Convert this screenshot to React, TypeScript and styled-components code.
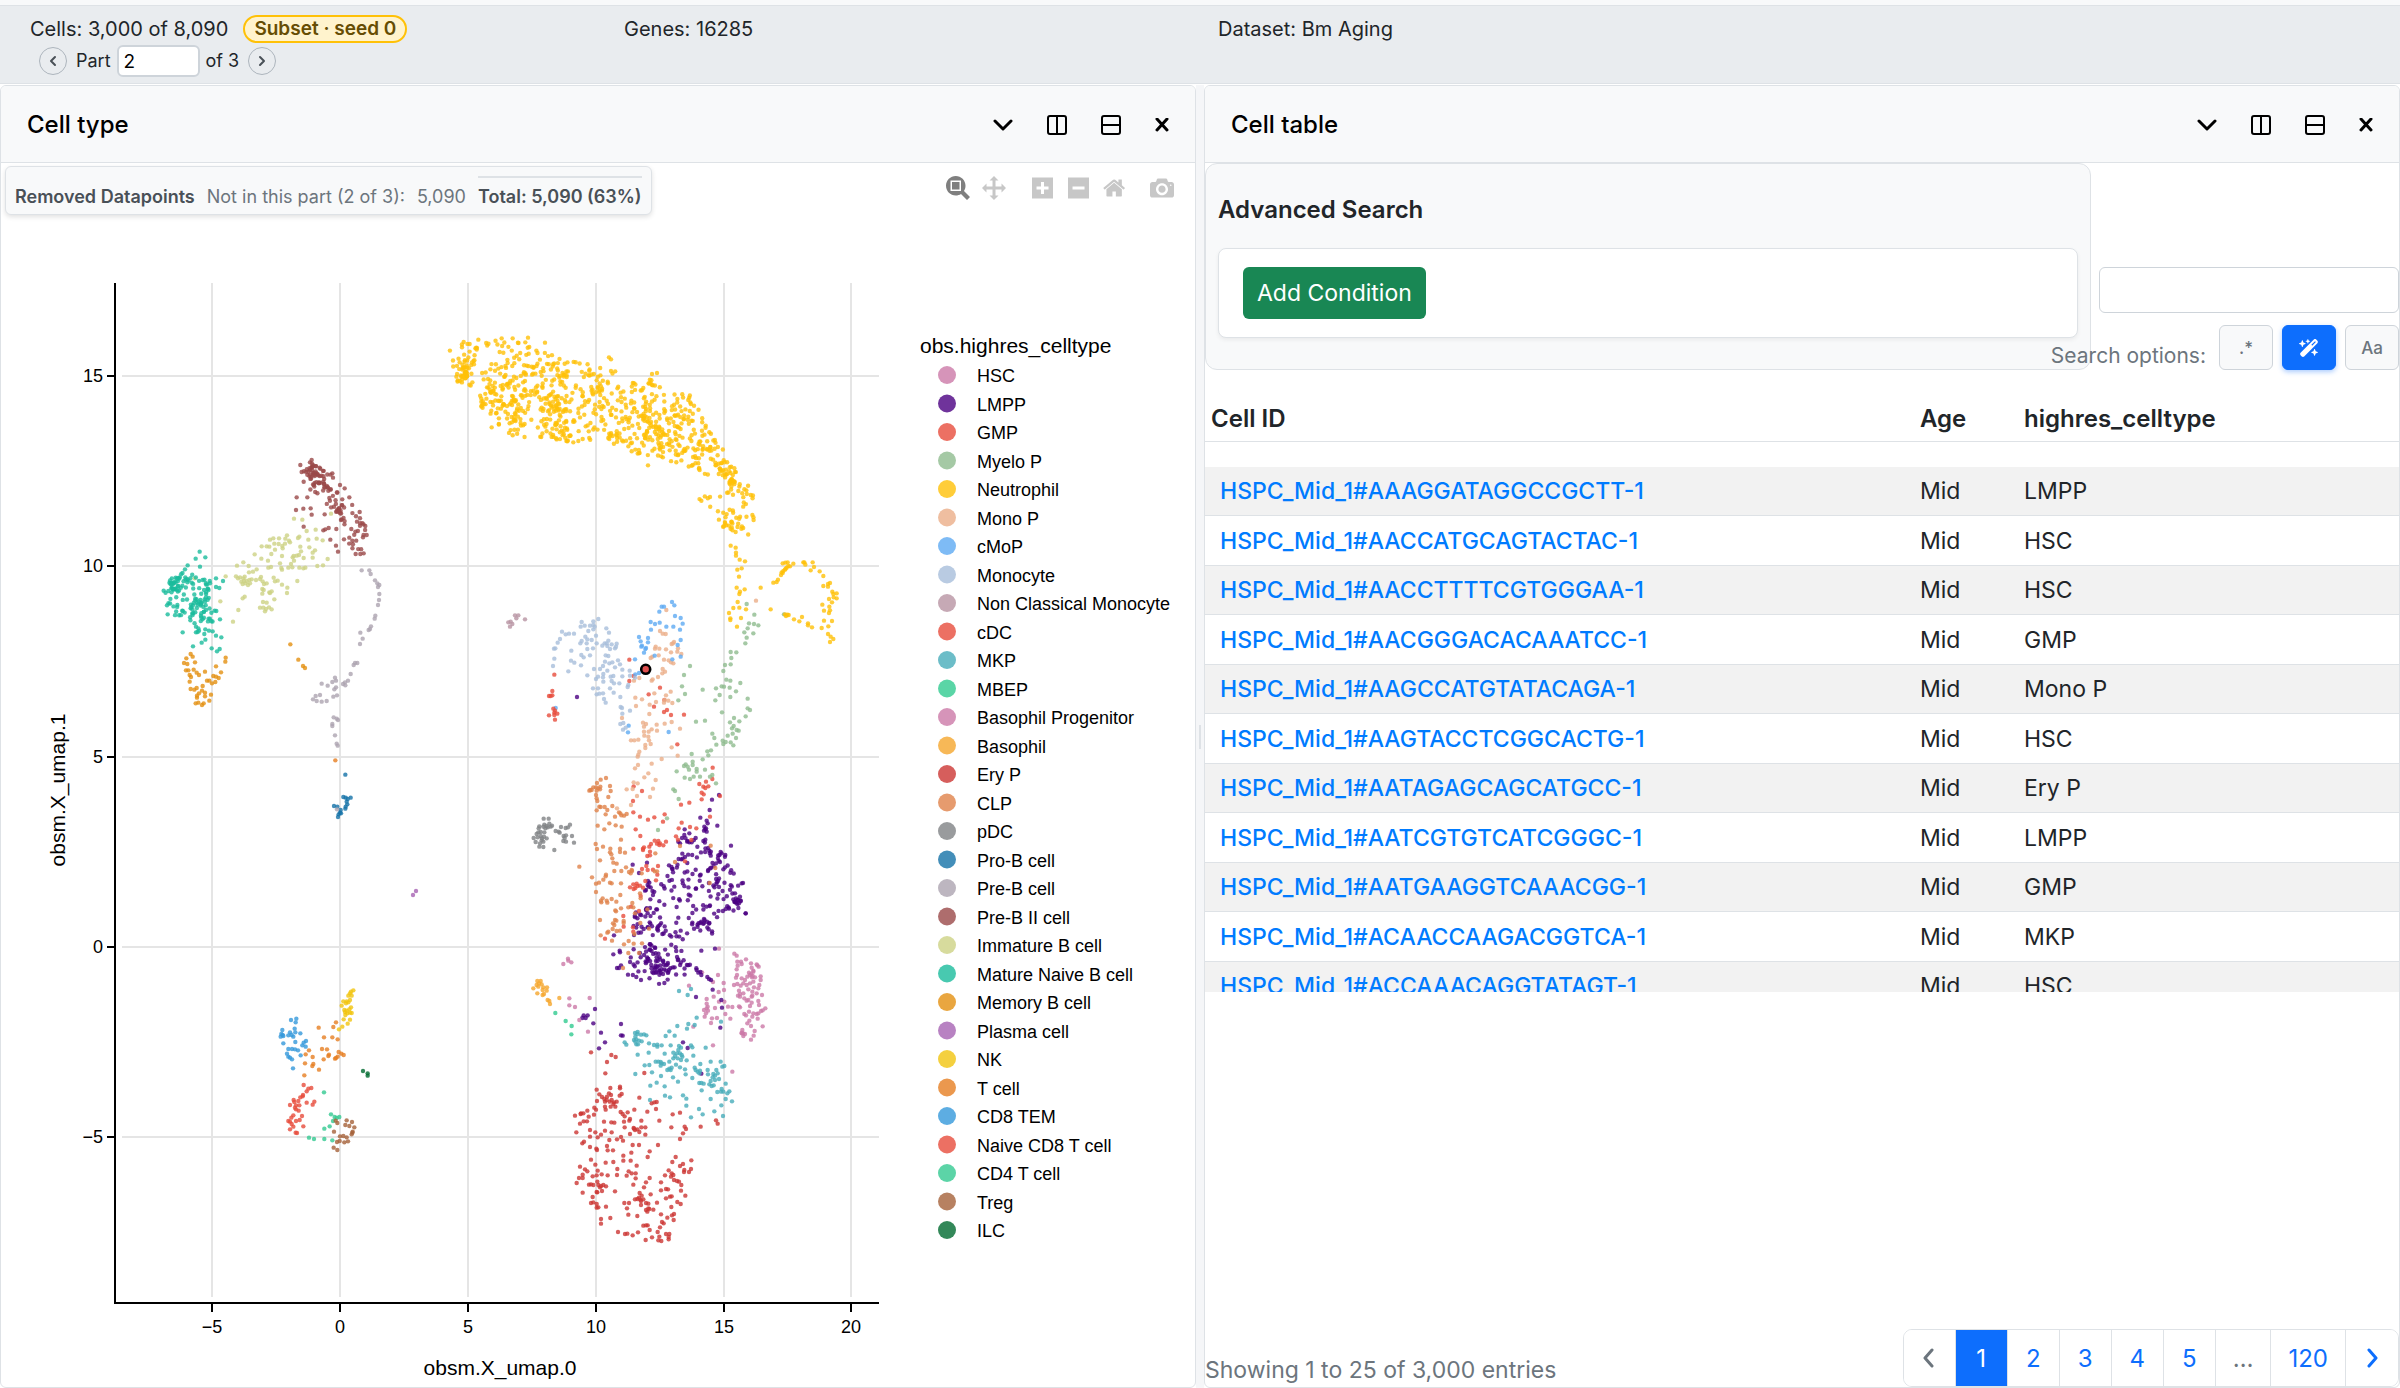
import React from 'react';
import styled, { createGlobalStyle } from 'styled-components';
import { FaWandMagicSparkles } from 'react-icons/fa6';

/* ---------- tokens ---------- */

const line = '#dee2e6';
const surface = '#f8f9fa';
const muted = '#6c757d';
const blue = '#0d6efd';
const sans = "Inter, 'Liberation Sans', sans-serif";
const chartFont = "'Liberation Sans', Arial, sans-serif";

const GlobalStyle = createGlobalStyle`
  *, *::before, *::after { box-sizing: border-box; }
  body { margin: 0; background: #fff; color: #212529; font-family: ${sans}; font-size: 24px; }
  button, input { font-family: inherit; margin: 0; }
`;

/* ---------- page frame ---------- */

const Page = styled.div`
  display: flex;
  flex-direction: column;
  min-height: 100vh;
`;

const StatusBar = styled.header`
  display: grid;
  grid-template-columns: repeat(4, 1fr);
  margin-bottom: 1px;
  padding: 9px 12px 6px;
  background: #e9ecef;
  border-top: 1px solid ${line};
  border-bottom: 1px solid ${line};
  font-size: 20px;
  line-height: 28px;
`;

const TopStrip = styled.div`
  height: 5px;
  background: ${surface};
`;

const StatusCell = styled.div`
  padding: 0 18px;
`;

const CountRow = styled.div`
  display: flex;
  align-items: center;
  gap: 15px;
`;

const SubsetBadge = styled.span`
  display: inline-flex;
  align-items: center;
  height: 28px;
  padding: 0 9px;
  border: 2px solid #ffc107;
  border-radius: 14px;
  background: #fff3cd;
  color: #664d03;
  font-size: 19px;
  font-weight: 600;
`;

const PartRow = styled.div`
  display: flex;
  align-items: center;
  gap: 6px;
  height: 32px;
  margin-top: 2px;
  padding-left: 6px;
  font-size: 18px;
`;

const RoundButton = styled.button`
  display: grid;
  place-items: center;
  width: 28px;
  height: 28px;
  margin: 0 3px;
  padding: 0;
  border: 1px solid #adb5bd;
  border-radius: 50%;
  background: transparent;
  color: #495057;
`;

const PartInput = styled.input`
  width: 83px;
  height: 32px;
  padding: 0 5px;
  border: 2px solid #ced4da;
  border-radius: 6px;
  background: #fff;
  color: #000;
  font-size: 19px;
`;

const Workspace = styled.main`
  flex: 1;
  display: grid;
  grid-template-columns: minmax(0, 1fr) 8px minmax(0, 1fr);
`;

const Gutter = styled.div`
  display: grid;
  place-items: center;
  background: #f5f6f8;
  &::after {
    content: '';
    width: 2px;
    height: 24px;
    background: ${line};
  }
`;

const Panel = styled.section`
  display: flex;
  flex-direction: column;
  min-width: 0;
  border: 1px solid ${line};
  border-radius: 6px;
  background: #fff;
  overflow: hidden;
`;

const PanelHeader = styled.div`
  display: flex;
  align-items: center;
  justify-content: space-between;
  height: 77px;
  padding: 2px 23px 0 26px;
  border-bottom: 1px solid ${line};
  background: ${surface};
`;

const PanelTitle = styled.h2`
  margin: 0;
  color: #000;
  font-size: 24px;
  font-weight: 500;
  line-height: 32px;
`;

const PanelActions = styled.div`
  display: flex;
  gap: 26px;
`;

const IconButton = styled.button`
  display: grid;
  place-items: center;
  width: 28px;
  height: 28px;
  padding: 0;
  border: 0;
  background: transparent;
  color: #000;
  &:last-child { width: 21px; }
`;

/* ---------- scatter plot ---------- */

const PlotBody = styled.div`
  position: relative;
  flex: 1;
`;

const PlotSvg = styled.svg`
  display: block;
  width: 100%;
  height: auto;
  text { font-family: ${chartFont}; fill: #000; }
`;

const RemovedNote = styled.div`
  position: absolute;
  top: 3px;
  left: 4px;
  display: flex;
  align-items: flex-end;
  gap: 12px;
  height: 49px;
  padding: 0 9px 5px 9px;
  border: 1px solid ${line};
  border-radius: 6px;
  background: ${surface};
  box-shadow: 0 2px 5px rgba(0, 0, 0, 0.12);
  color: ${muted};
  font-size: 18px;
  line-height: 24px;
  white-space: nowrap;
  strong { color: #495057; font-weight: 600; }
`;

const RemovedTotal = styled.strong`
  padding-top: 7px;
  border-top: 2px solid ${line};
`;

const ModeBar = styled.div`
  position: absolute;
  top: 13px;
  right: 15px;
  display: flex;
  align-items: center;
`;

const ModeButton = styled.button<{ $active?: boolean; $gap?: boolean }>`
  display: grid;
  place-items: center;
  width: 36px;
  height: 24px;
  margin-left: ${(p) => (p.$gap ? '12px' : '0')};
  padding: 0;
  border: 0;
  background: transparent;
  svg { fill: ${(p) => (p.$active ? '#7f7f7f' : '#c7c7c7')}; }
`;

/* ---------- table panel ---------- */

const SearchArea = styled.div`
  display: flex;
  gap: 8px;
`;

const AdvancedSearch = styled.div`
  flex: 1;
  padding: 30px 12px 31px;
  border: 1px solid ${line};
  border-radius: 12px;
  background: ${surface};
`;

const AdvancedTitle = styled.h3`
  margin: 0 0 22px;
  font-size: 24px;
  font-weight: 600;
  line-height: 32px;
`;

const ConditionBox = styled.div`
  padding: 18px 24px;
  border: 1px solid ${line};
  border-radius: 8px;
  background: #fff;
  box-shadow: 0 2px 4px rgba(0, 0, 0, 0.06);
`;

const AddButton = styled.button`
  display: block;
  height: 52px;
  padding: 0 14px;
  border: 0;
  border-radius: 6px;
  background: #198754;
  color: #fff;
  font-size: 23px;
`;

const SearchSide = styled.div`
  display: flex;
  flex-direction: column;
  justify-content: flex-end;
  gap: 12px;
  width: 300px;
`;

const SearchInput = styled.input`
  width: 100%;
  height: 46px;
  padding: 0 12px;
  border: 1px solid #ced4da;
  border-radius: 6px;
  background: #fff;
  font-size: 21px;
`;

const OptionRow = styled.div`
  display: flex;
  align-items: center;
  justify-content: flex-end;
  gap: 9px;
  white-space: nowrap;
`;

const OptionLabel = styled.span`
  padding: 16px 4px 0 0;
  color: ${muted};
  font-size: 21px;
  line-height: 28px;
`;

const OptionButton = styled.button<{ $active?: boolean }>`
  display: grid;
  place-items: center;
  flex: none;
  width: 54px;
  height: 45px;
  padding: 0;
  border: 1px solid ${(p) => (p.$active ? blue : '#ced4da')};
  border-radius: 6px;
  background: ${(p) => (p.$active ? blue : surface)};
  box-shadow: ${(p) => (p.$active ? '0 2px 5px rgba(13, 110, 253, 0.35)' : 'none')};
  color: ${(p) => (p.$active ? '#fff' : muted)};
  font-size: 17px;
  font-weight: 500;
`;

const TableWindow = styled.div`
  height: 622px;
  overflow: hidden;
`;

const DataTable = styled.table`
  width: 100%;
  table-layout: fixed;
  border-collapse: separate;
  border-spacing: 0;
  line-height: 32px;
  th, td { padding: 0 6px; text-align: left; white-space: nowrap; }
  th { height: 72px; padding-top: 26px; border-bottom: 1px solid ${line}; font-weight: 600; }
  td { height: 49px; border-bottom: 1px solid ${line}; font-size: 23px; }
  tbody::before { content: ''; display: block; height: 25px; }
  tbody tr:nth-child(odd) td { background: #f2f2f2; }
  tbody tr:nth-child(even) td { height: 50px; }
`;

const AgeCol = styled.col`
  width: 104px;
`;

const TypeCol = styled.col`
  width: 381px;
`;

const CellLink = styled.a`
  padding-left: 9px;
  color: #007bff;
  font-weight: 500;
  text-decoration: none;
`;

const TableFooter = styled.div`
  display: flex;
  justify-content: space-between;
  align-items: flex-end;
  margin-top: auto;
`;

const EntryCount = styled.p`
  margin: 0;
  color: ${muted};
  font-size: 23px;
  line-height: 34px;
`;

const Pager = styled.nav`
  display: flex;
  border: 1px solid ${line};
  border-radius: 9px;
  overflow: hidden;
`;

const PageButton = styled.button<{ $active?: boolean; $quiet?: boolean }>`
  display: grid;
  place-items: center;
  min-width: 52px;
  height: 56px;
  padding: 0 17px;
  border: 0;
  border-right: 1px solid ${line};
  background: ${(p) => (p.$active ? blue : '#fff')};
  color: ${(p) => (p.$active ? '#fff' : p.$quiet ? muted : blue)};
  font-size: 24px;
  &:last-child { border-right: 0; }
`;

/* ---------- data ---------- */

type Cluster = {
  name: string;
  color: string;
  /* [origin x, origin y, "x,y x,y ..."] with offsets in thirds of a unit */
  points?: [number, number, string][];
  /* [origin x, origin y, count, outline] filled with seeded samples */
  areas?: [number, number, number, string][];
};

const clusters: Cluster[] = [
  {
    name: 'HSC', color: '#cc79a7',
    points: [[540, 900, '583,161 590,167 618,178 603,185 592,185 605,192 593,197 590,208 633,190 650,193 656,200 635,203 640,212 627,218 630,225 636,232 622,230 645,232 662,229 662,240 591,225 588,233 605,235 615,240 610,250 582,255 592,252 602,257 620,255 630,250 640,245 642,262 655,265 658,255 625,268 637,275 650,280 666,285 597,272 600,282 594,287 600,290 613,295 620,302 625,300 635,290 637,287 597,319 600,322 630,318 635,308 655,303 657,315 676,325 663,333 668,331 627,335 640,340 650,342 655,340 613,342 618,346 637,350 628,362 653,356 622,370 633,378 668,379 607,390 609,400 610,408 615,402 605,398 644,393 641,407 633,419 534,225 537,146 486,217 519,246 551,249 552,270 536,276 521,290 537,305 553,305 500,297 500,311 503,320 500,325 492,330 504,332 525,324 498,340 494,350 516,355 531,354 564,320 577,321 556,342 571,356 513,369 460,380 447,257 519,436 577,515 640,215 634,222 638,228 610,280 605,400 652,196']],
  },
  {
    name: 'LMPP', color: '#4b0082',
    points: [
      [520, 580, '171,351 338,854 357,879 381,848 597,645 576,659 569,690 541,713 560,722 563,730 553,740 558,745 552,752 560,755 556,748 556,779 592,737 633,797 494,748 493,765 486,774 475,785 480,790 508,760 527,774 515,787 508,787 282,1066 484,838 488,836 487,821 447,856 457,867 384,903 388,908 383,915 392,922 378,930 375,932 386,920 399,945 391,958 669,909 665,910 677,1000 660,950 655,960 648,955 643,965 640,958 652,972 645,940 662,962 610,868 615,862 596,842 600,846 588,850 602,816 605,820'],
      [540, 900, '165,327 143,346 131,346 137,354 127,354 160,370 183,398 243,372 243,406 248,407 195,427 177,445 429,427 443,444 484,521 541,383 544,300 546,323 518,269 468,291 525,146 484,152 513,240 507,237 502,231 484,225 470,210 475,218 617,40 585,5 592,0 597,10 602,3 588,8 220,163 239,152 240,157 231,204 237,204 243,196 264,224 303,240 289,231'],
    ],
    areas: [
      [0, 0, 140, '683,833 702,838 723,850 733,863 738,880 742,900 741,908 730,918 724,930 712,934 690,930 672,925 660,905 650,890 668,865 680,855'],
      [0, 0, 105, '632,910 650,895 665,925 690,933 684,950 690,960 706,972 700,976 690,968 683,978 673,988 660,989 645,978 627,974 632,950'],
      [0, 0, 38, '640,944 655,944 668,965 675,968 660,980 645,965'],
    ],
  },
  {
    name: 'GMP', color: '#e74c3c',
    points: [[520, 580, '328,239 328,303 341,288 420,323 386,343 402,380 432,396 441,390 433,360 453,405 492,404 472,493 578,563 577,597 558,605 538,612 550,620 565,619 556,624 545,638 551,643 545,658 600,648 508,668 483,674 570,710 341,619 366,633 339,663 340,697 360,710 384,719 403,712 434,703 429,725 485,728 476,745 510,741 529,745 347,748 361,768 468,769 474,779 340,806 369,806 372,802 388,800 393,792 390,815 411,791 415,783 420,790 430,796 438,785 418,795 404,782 369,810 382,828 390,826 495,844 414,858 379,858 366,867 383,870 399,869 412,884 408,901 376,903 330,922 340,913 350,911 360,917 346,924 352,918 341,927 369,923 362,948 333,980 357,993 310,1008 311,1040 339,1042 340,1055 255,1076 514,780']],
  },
  {
    name: 'Myelo P', color: '#8fbc8f',
    points: [[520, 580, '680,72 703,104 687,130 702,132 715,136 683,145 673,157 700,160 680,173 676,190 632,216 649,217 634,234 615,255 632,253 610,273 510,258 492,285 486,319 548,329 619,299 631,302 661,309 605,319 588,325 612,320 629,323 599,345 631,351 648,334 586,361 495,342 475,361 683,356 683,385 690,390 677,409 606,397 642,414 658,424 630,427 528,425 555,422 641,438 636,445 650,450 656,452 623,467 638,461 648,474 577,461 583,474 589,494 608,482 617,486 610,492 632,487 640,496 573,511 562,514 565,526 515,522 548,538 518,545 518,555 497,553 503,560 492,558 507,569 530,567 530,575 555,569 470,574 521,590 494,593 510,597 540,590 577,585 570,590 588,610 460,628 465,633 476,657 441,715 414,750 792,103']],
  },
  {
    name: 'Neutrophil', color: '#ffc107',
    points: [
      [420, 310, '932,707 947,713 948,728 948,737 959,749 975,754 952,779 965,775 957,800 950,833 974,838 958,852 960,845 953,876 940,894 958,893 978,898 927,909 931,925 931,930 963,924 951,950 1022,833 1052,898 1060,818 1070,816 1074,809 1083,795 1085,787 1088,789 1090,783 1095,779 1100,773 1105,768 1097,776 1110,769 1120,761 1103,757 1096,758 1088,760 1150,757 1153,757 1156,764 1178,757 1182,771 1172,781 1199,784 1210,798 1230,819 1224,822 1224,830 1210,828 1237,845 1240,852 1250,850 1241,862 1250,865 1227,867 1236,877 1207,884 1228,890 1212,902 1227,909 1230,901 1212,932 1236,933 1225,949 1205,954 1176,952 1164,940 1164,946 1146,921 1138,934 1122,928 1106,915 1098,918 1095,913 1102,914 1224,972 1232,980 1240,987 1230,996 375,98 324,83 245,85 278,85 175,89 131,96 711,189 696,192 567,142 573,148 684,466 215,352'],
    ],
    areas: [
      [420, 310, 640, '88,120 115,98 175,95 245,90 320,95 390,130 440,150 520,160 585,178 625,200 665,235 700,190 735,228 800,240 830,270 845,320 875,370 912,415 945,470 955,515 925,520 850,490 800,478 740,450 685,438 640,430 550,395 485,400 370,388 280,382 205,325 170,300 165,240 115,215 98,170'],
      [420, 310, 32, '100,150 155,150 160,190 135,220 112,215 98,170'],
      [420, 310, 45, '170,290 200,230 290,215 320,240 290,335 215,310'],
      [420, 310, 35, '370,230 440,260 440,350 400,350 360,310'],
      [420, 310, 40, '650,300 720,340 810,390 810,445 760,435 680,410'],
      [420, 310, 32, '850,400 910,420 965,510 920,530 880,460'],
      [420, 310, 28, '935,500 990,530 1005,575 1010,625 985,640 950,560 900,560'],
      [420, 310, 30, '880,590 940,600 985,640 985,675 960,682 920,665 900,640'],
      [420, 310, 7, '815,572 845,545 890,535 930,590 870,595'],
    ],
  },
  {
    name: 'Mono P', color: '#ebae88',
    points: [[520, 580, '439,90 420,153 437,162 428,161 455,192 462,186 459,190 407,200 418,206 405,206 438,208 453,217 474,205 472,215 484,222 416,226 432,239 392,234 397,230 446,241 453,247 460,250 428,267 435,275 427,280 414,291 395,302 398,298 358,294 342,302 403,340 452,335 438,346 434,360 445,362 457,369 432,368 346,353 366,358 389,374 348,378 408,366 306,414 388,402 369,428 378,432 410,434 455,426 434,431 372,440 386,455 395,448 411,452 372,455 373,467 333,481 343,481 355,479 376,495 387,481 392,492 376,504 455,502 480,446 473,527 358,515 355,524 353,530 425,537 395,551 354,555 345,565 385,580 373,592 407,600 341,607 353,610 320,628 338,627 399,626 351,648 390,651 333,675 291,685 385,470 708,62']],
  },
  {
    name: 'cMoP', color: '#5eaaf2',
    points: [[520, 580, '456,66 463,76 425,80 432,80 418,95 465,108 482,114 488,131 480,149 460,140 439,140 419,128 405,132 392,126 393,149 357,171 384,174 362,184 384,187 366,197 376,207 372,218 345,238 404,227 473,195 482,180 482,230 457,238 357,279 346,283 107,384 326,437 324,457 446,456 364,200 378,204']],
  },
  {
    name: 'Monocyte', color: '#a8bedb',
    points: [[520, 580, '185,126 182,140 194,137 220,124 235,117 220,135 220,148 210,137 126,155 137,163 147,161 162,161 120,177 113,188 102,206 106,205 154,212 103,236 99,258 145,274 153,242 163,248 183,256 181,190 185,183 200,190 196,170 205,153 215,180 230,190 228,167 219,205 210,226 191,232 184,225 202,207 259,145 267,158 265,182 254,190 247,197 262,198 275,193 285,205 270,207 290,191 257,226 255,245 249,258 268,250 277,247 285,262 294,241 300,253 202,286 222,267 228,297 234,290 240,267 250,282 262,272 272,290 280,288 250,305 249,292 275,303 282,310 307,289 307,269 298,310 329,272 330,287 219,325 234,325 230,343 238,341 249,340 270,325 281,338 301,351 252,357 257,368 302,381 306,384 330,392 307,401 301,432 310,429 309,449 323,321 345,293 317,443 325,315 224,140 288,200 260,190 265,228 202,178']],
  },
  { name: 'Non Classical Monocyte', color: '#b893a2', points: [[420, 310, '272,935 265,937 277,942 270,950 289,925 285,916 295,916 315,928']] },
  { name: 'cDC', color: '#e74c3c', points: [[520, 580, '103,284 97,333 87,348 97,346 100,386 105,392 103,398 112,401 103,405 87,406 105,419 92,348']] },
  {
    name: 'MKP', color: '#47acba',
    points: [[540, 900, '417,273 453,267 443,285 470,353 412,378 445,372 464,375 441,386 388,394 377,408 404,407 543,365 285,399 293,396 292,402 303,404 312,403 319,406 286,410 282,420 289,418 286,425 297,422 305,424 294,433 289,433 254,427 259,434 327,430 342,435 352,434 365,436 352,440 392,436 326,458 293,464 374,461 417,438 423,443 415,450 400,458 411,460 420,460 425,465 405,468 413,475 427,470 400,475 423,480 440,481 453,436 457,442 460,467 497,443 347,485 355,485 362,486 372,492 365,490 388,485 314,496 328,495 362,497 408,494 395,503 388,506 382,510 392,510 420,502 435,508 437,523 464,503 467,510 481,492 512,485 542,485 553,498 547,500 336,517 286,522 457,534 399,532 414,545 363,528 350,548 331,557 374,559 478,520 473,515 480,512 503,510 504,523 520,522 525,527 533,520 529,510 518,532 525,540 512,543 537,537 478,549 484,549 491,551 508,553 515,558 521,556 557,551 485,571 545,567 543,575 532,576 550,575 568,574 562,580 557,597 512,597 576,604 544,616 375,587 390,592 429,586 439,596 439,617 330,600 477,627 488,643 523,634 549,648 453,652']],
  },
  { name: 'MBEP', color: '#31ca90', points: [[540, 900, '46,339 77,363 95,378 94,403']] },
  { name: 'Basophil Progenitor', color: '#cc79a7', points: [[540, 900, '84,176 85,182 94,187 70,192 88,295 88,316 105,321 149,294 118,360 144,395']] },
  { name: 'Basophil', color: '#f5a62d', points: [[540, 900, '2,243 5,253 10,262 21,262 8,270 20,272 12,282 8,285 23,300 28,303 30,312 58,294 -8,243 -3,250 -10,255 -20,265 -8,280 -5,260']] },
  {
    name: 'Ery P', color: '#cc3633',
    points: [[540, 900, '153,457 214,465 227,471 201,486 196,520 313,519 240,560 240,565 211,564 170,569 178,583 186,591 193,597 201,590 207,580 213,585 245,582 239,587 171,603 195,605 200,600 209,605 215,600 222,607 220,612 230,605 212,620 226,620 195,620 197,629 168,629 163,623 298,593 335,610 343,607 350,606 348,627 322,635 283,629 263,637 242,636 248,642 254,649 142,632 130,640 122,642 123,640 105,647 146,650 162,644 120,671 131,664 141,664 192,665 214,667 223,668 270,657 268,662 252,665 304,662 358,662 398,643 420,638 528,661 533,671 482,680 254,682 281,684 292,688 304,682 316,682 285,690 298,696 270,702 316,704 282,686 394,682 434,680 438,687 429,700 420,717 150,690 150,710 109,697 166,697 195,692 215,697 183,704 173,712 208,720 231,718 243,711 249,722 132,725 127,730 150,741 169,746 171,750 201,738 203,751 219,751 278,735 297,735 354,735 329,754 323,771 274,758 250,767 250,782 272,782 153,779 166,794 197,788 220,786 290,797 407,771 397,786 454,781 429,792 120,800 135,808 142,814 128,824 173,812 128,834 117,834 158,829 170,826 185,823 203,826 232,807 231,825 266,814 260,827 275,820 287,820 287,835 329,834 386,811 375,826 395,820 400,825 393,830 420,798 433,810 432,816 447,816 453,807 402,840 411,843 417,845 424,855 318,847 312,862 280,854 363,847 110,849 128,878 147,854 153,853 160,855 172,845 175,855 180,862 183,858 190,855 198,859 186,873 170,876 172,877 225,874 158,891 153,909 160,907 170,912 175,922 170,923 198,920 183,957 183,971 211,954 299,879 305,887 297,893 292,897 285,898 301,899 310,898 303,903 303,915 318,909 325,911 332,883 363,871 378,867 384,868 378,895 390,890 395,889 423,872 436,887 412,906 422,912 394,921 351,908 253,909 267,909 261,925 265,944 292,948 318,930 322,935 328,927 340,929 325,925 363,943 382,953 396,946 402,942 401,960 310,977 318,976 323,976 366,966 371,970 360,982 329,990 234,996 255,1002 262,1001 278,1006 294,997 336,1012 317,1020 353,996 358,1010 355,1021 364,1023 378,1002 388,1002 386,1011 386,1018']],
  },
  {
    name: 'CLP', color: '#e0824a',
    points: [[520, 580, '258,594 242,599 231,609 270,618 241,620 235,625 228,622 220,622 211,630 208,632 215,630 240,628 230,632 272,633 228,645 230,655 232,663 265,651 242,681 238,680 254,681 277,678 230,691 257,703 262,690 285,710 297,697 301,700 304,706 320,702 312,707 233,737 268,730 253,748 287,736 305,740 303,779 227,792 231,807 249,800 178,860 271,806 270,817 300,816 300,806 315,818 240,841 277,835 274,823 280,848 290,851 283,873 304,873 318,862 216,892 228,911 258,884 257,889 237,908 250,899 270,908 275,910 228,936 303,910 301,945 248,955 244,967 260,962 262,968 275,957 289,965 243,962 327,876 336,873 332,880 365,880 335,870 406,820 404,874 411,874 465,846 572,797 586,864 569,909 480,798 286,991 303,985 288,994 337,969 325,982 240,1020 285,1020 289,1022 311,1023 311,1029 279,1030 283,1035 278,1047 290,1053 262,1058 265,1055 242,1066 300,1052 276,1082 343,1062 361,1029 387,1046 366,1090 326,1083 341,1091 312,1093 340,982 362,955 360,940 382,988 345,1000 325,1119 357,1119 309,1164']],
  },
  { name: 'pDC', color: '#808284', points: [[520, 580, '71,716 86,716 73,734 88,731 80,738 92,740 96,737 58,739 56,745 76,745 83,742 123,741 137,744 150,734 144,742 55,757 50,762 62,756 73,757 41,774 53,772 62,768 66,775 72,770 80,775 47,786 65,781 70,785 58,800 70,801 103,810 107,753 116,755 119,758 131,768 138,766 134,774 130,783 138,785 156,768 162,788 60,790 70,740']] },
  { name: 'Pro-B cell', color: '#1472a8', points: [[100, 420, '736,1064 730,1131 737,1133 743,1137 752,1133 740,1145 742,1153 737,1160 736,1166 702,1158 712,1160 722,1170 720,1178 716,1183 714,1191 723,1180']] },
  { name: 'Pre-B cell', color: '#aca4b0', points: [[100, 420, '785,451 808,451 812,462 825,481 832,490 838,495 834,501 838,522 837,540 834,555 826,587 824,596 813,619 810,627 806,630 781,638 788,656 780,672 772,729 765,729 761,735 752,762 744,782 735,787 729,792 736,796 705,773 708,782 697,786 708,802 703,808 683,797 665,791 711,826 700,830 660,825 647,828 639,838 650,843 665,845 680,843 701,892 710,896 714,900 697,912 697,918 705,946 710,971 713,977 711,1168']] },
  {
    name: 'Pre-B II cell', color: '#9a4848',
    points: [[100, 420, '590,232 622,232 588,270 610,266 632,265 635,284 611,320 674,283 670,331 676,328 686,324 709,327 691,359 708,377 714,395 601,135 605,156 635,120 630,127 636,131 697,160 699,173 720,195 734,205 748,232 779,276 796,318 800,345 791,400 781,402 767,402 732,358']],
    areas: [
      [100, 420, 82, '605,140 635,120 660,140 700,170 705,210 755,240 760,275 790,300 798,345 788,400 765,400 745,370 735,320 710,280 680,255 655,225 625,210 610,190'],
      [100, 420, 26, '615,150 640,130 665,150 680,195 630,180'],
      [100, 420, 10, '705,262 735,262 730,280 708,285'],
    ],
  },
  {
    name: 'Immature B cell', color: '#cdd285',
    points: [[100, 420, '582,296 607,299 693,281 620,333 647,329 561,346 598,350 594,354 510,359 520,355 537,355 556,356 567,362 570,367 625,359 650,356 668,361 485,379 500,379 508,380 523,371 536,372 547,378 555,371 548,385 525,389 601,380 628,382 645,391 603,394 514,402 464,403 546,408 638,398 484,416 581,408 590,407 597,405 578,412 611,414 638,413 683,417 504,422 582,422 540,430 573,432 430,427 411,437 446,438 505,443 513,441 544,444 565,443 577,442 598,443 610,445 616,443 652,438 669,436 470,448 546,449 377,469 459,455 447,457 408,469 414,475 420,472 430,475 434,470 424,485 432,483 440,483 448,480 428,492 436,490 444,495 450,490 455,478 468,480 483,471 480,477 488,484 492,492 500,490 521,473 525,484 533,482 546,494 562,503 592,483 487,507 491,510 515,514 510,519 487,521 508,517 561,519 434,530 428,535 361,544 523,538 489,546 500,548 480,563 490,563 498,567 507,562 495,574 515,568 415,570 399,605 284,475']],
  },
  {
    name: 'Mature Naive B cell', color: '#1abc9c',
    points: [[100, 420, '299,395 287,416 316,412 300,440 263,436 255,448 288,620 295,625 297,632 288,637 293,636 316,628 327,632 338,634 313,642 248,637 348,647 364,652 316,659 305,668 279,679 335,685 359,687 351,694 348,475 369,483 358,504 348,501 203,583 201,556 191,512 360,598 349,573 344,572']],
    areas: [
      [100, 420, 98, '190,510 215,470 255,455 300,460 325,470 340,500 335,530 320,560 345,575 345,605 320,610 270,610 245,590 215,585 205,555'],
      [100, 420, 20, '210,480 240,465 240,500 215,520'],
      [100, 420, 14, '290,500 310,520 320,600 280,580'],
    ],
  },
  { name: 'Memory B cell', color: '#e39010', points: [[100, 420, '272,702 278,710 259,715 252,729 262,732 285,727 258,751 265,751 281,749 290,758 297,765 269,765 273,771 315,755 269,785 377,713 376,725 348,739 363,757 340,768 348,770 356,774 321,782 328,782 346,786 336,790 308,798 272,807 283,809 290,804 306,812 297,820 315,818 333,824 291,827 315,829 291,833 328,842 287,850 295,848 306,855 311,850 571,673 595,719 609,738 615,744']] },
  { name: 'Plasma cell', color: '#a663b3', points: [[0, 0, '1239,2685 1248,2673']] },
  { name: 'NK', color: '#f1c40f', points: [[240, 940, '340,151 333,155 330,160 325,167 335,167 330,180 310,184 320,184 318,190 325,187 305,197 333,202 328,208 313,210 315,216 322,220 316,225 330,218 335,219 311,238 330,239 323,251 307,260 297,268 320,212']] },
  { name: 'T cell', color: '#e67e22', points: [[240, 940, '288,247 280,261 236,263 252,292 277,292 293,298 246,327 261,328 207,331 197,343 218,351 267,344 265,348 251,358 296,336 304,341 311,345 293,350 288,354 285,356 195,370 220,372 217,378 237,389 193,406'], [100, 420, '706,1021']] },
  { name: 'CD8 TEM', color: '#3498db', points: [[240, 940, '153,240 169,236 167,247 127,270 164,266 124,282 122,290 130,288 128,285 150,277 145,286 155,285 160,290 181,280 166,306 130,310 198,303 191,308 187,316 197,320 145,327 156,327 165,328 174,331 141,341 145,350 150,353 156,358 182,346 159,385 166,277']] },
  { name: 'Naive CD8 T cell', color: '#e74c3c', points: [[240, 940, '191,435 205,446 214,444 200,454 189,465 188,469 181,472 161,480 163,486 175,483 150,495 168,496 178,496 165,503 168,508 176,512 200,488 223,485 218,494 160,526 154,533 186,528 179,540 145,543 150,545 168,543 155,552 160,560 190,559 150,568 167,578 171,579']] },
  { name: 'CD4 T cell', color: '#33c991', points: [[240, 940, '252,457 273,523 284,531 298,531 279,543 269,559 253,566 207,593 222,597 253,597 277,601 290,534']] },
  { name: 'Treg', color: '#a5623a', points: [[240, 940, '287,542 292,549 320,541 336,546 316,555 328,558 343,562 338,575 335,583 282,575 300,589 310,588 320,592 324,604 313,607 299,603 291,606 281,623 292,630 337,578']] },
  { name: 'ILC', color: '#006a30', points: [[240, 940, '369,393 383,400 383,407']] },
];

type Pt = [number, number];

const parse = (ox: number, oy: number, s: string, k: number): Pt[] =>
  s.split(' ').map((p) => {
    const [x, y] = p.split(',').map(Number);
    return [ox + x / k, oy + y / k];
  });

function inside([x, y]: Pt, poly: Pt[]) {
  let hit = false;
  for (let i = 0, j = poly.length - 1; i < poly.length; j = i++) {
    const [xi, yi] = poly[i];
    const [xj, yj] = poly[j];
    if (yi > y !== yj > y && x < ((xj - xi) * (y - yi)) / (yj - yi) + xi) hit = !hit;
  }
  return hit;
}

function sample(poly: Pt[], count: number, seed: number): Pt[] {
  let s = seed;
  const rand = () => {
    s = (s * 1664525 + 1013904223) % 4294967296;
    return s / 4294967296;
  };
  const xs = poly.map((p) => p[0]);
  const ys = poly.map((p) => p[1]);
  const [x0, x1, y0, y1] = [Math.min(...xs), Math.max(...xs), Math.min(...ys), Math.max(...ys)];
  const out: Pt[] = [];
  while (out.length < count) {
    const p: Pt = [x0 + rand() * (x1 - x0), y0 + rand() * (y1 - y0)];
    if (inside(p, poly)) out.push(p);
  }
  return out;
}

const plotted = clusters.map((c, i) => ({
  name: c.name,
  color: c.color,
  dots: [
    ...(c.areas ?? []).flatMap(([ox, oy, n, s], j) => sample(parse(ox, oy, s, ox ? 3 : 1), n, 97 + i * 31 + j * 7)),
    ...(c.points ?? []).flatMap(([ox, oy, s]) => parse(ox, oy, s, 3)),
  ],
}));

const xTicks = [-5, 0, 5, 10, 15, 20];
const yTicks = [15, 10, 5, 0, -5];
const xPos = (v: number) => Math.round(340 + v * 25.57);
const yPos = (v: number) => Math.round(947 - v * 38.07);
const label = (v: number) => String(v).replace('-', '−');

const rows: [string, string, string][] = [
  ['HSPC_Mid_1#AAAGGATAGGCCGCTT-1', 'Mid', 'LMPP'],
  ['HSPC_Mid_1#AACCATGCAGTACTAC-1', 'Mid', 'HSC'],
  ['HSPC_Mid_1#AACCTTTTCGTGGGAA-1', 'Mid', 'HSC'],
  ['HSPC_Mid_1#AACGGGACACAAATCC-1', 'Mid', 'GMP'],
  ['HSPC_Mid_1#AAGCCATGTATACAGA-1', 'Mid', 'Mono P'],
  ['HSPC_Mid_1#AAGTACCTCGGCACTG-1', 'Mid', 'HSC'],
  ['HSPC_Mid_1#AATAGAGCAGCATGCC-1', 'Mid', 'Ery P'],
  ['HSPC_Mid_1#AATCGTGTCATCGGGC-1', 'Mid', 'LMPP'],
  ['HSPC_Mid_1#AATGAAGGTCAAACGG-1', 'Mid', 'GMP'],
  ['HSPC_Mid_1#ACAACCAAGACGGTCA-1', 'Mid', 'MKP'],
  ['HSPC_Mid_1#ACCAAACAGGTATAGT-1', 'Mid', 'HSC'],
];

/* ---------- icons ---------- */

const modeIcons = {
  zoom: { w: 1000, d: 'm1000-25l-250 251c40 63 63 138 63 218 0 224-182 406-407 406-224 0-406-182-406-406s183-406 407-406c80 0 155 22 218 62l250-250 125 125z m-812 250l0 438 437 0 0-438-437 0z m62 375l313 0 0-312-313 0 0 312z' },
  pan: { w: 1000, d: 'm1000 350l-187 188 0-125-250 0 0 250 125 0-188 187-187-187 125 0 0-250-250 0 0 125-188-188 186-187 0 125 252 0 0-250-125 0 187-188 188 188-125 0 0 250 250 0 0-126 187 188z' },
  plus: { w: 875, d: 'm1 787l0-875 875 0 0 875-875 0z m687-500l-187 0 0-187-125 0 0 187-188 0 0 125 188 0 0 187 125 0 0-187 187 0 0-125z' },
  minus: { w: 875, d: 'm0 788l0-876 875 0 0 876-875 0z m688-500l-500 0 0 125 500 0 0-125z' },
  home: { w: 928, d: 'm786 296v-267q0-15-11-26t-25-10h-214v214h-143v-214h-214q-15 0-25 10t-11 26v267q0 1 0 2t0 2l321 264 321-264q1-1 1-4z m124 39l-34-41q-5-5-12-6h-2q-7 0-12 3l-386 322-386-322q-7-4-13-4-7 2-12 7l-35 41q-4 5-3 13t6 12l401 334q18 15 42 15t43-15l136-114v109q0 8 5 13t13 5h107q8 0 13-5t5-13v-227l122-102q5-5 6-12t-4-13z' },
  camera: { w: 1000, d: 'm500 450c-83 0-150-67-150-150 0-83 67-150 150-150 83 0 150 67 150 150 0 83-67 150-150 150z m400 150h-120c-16 0-34 13-39 29l-31 93c-6 15-23 28-40 28h-340c-16 0-34-13-39-28l-31-94c-6-15-23-28-40-28h-120c-55 0-100-45-100-100v-450c0-55 45-100 100-100h800c55 0 100 45 100 100v450c0 55-45 100-100 100z m-400-550c-138 0-250 112-250 250 0 138 112 250 250 250 138 0 250-112 250-250 0-138-112-250-250-250z m365 380c-19 0-35 16-35 35 0 19 16 35 35 35 19 0 35-16 35-35 0-19-16-35-35-35z' },
};

const ModeIcon = ({ name }: { name: keyof typeof modeIcons }) => (
  <svg viewBox={`0 0 ${modeIcons[name].w} 1000`} height="24">
    <path transform="matrix(1 0 0 -1 0 850)" d={modeIcons[name].d} />
  </svg>
);

const Stroke = ({ d, w = 20, h = 20, sw = 2 }: { d: string; w?: number; h?: number; sw?: number }) => (
  <svg width={w} height={h} viewBox={`0 0 ${w} ${h}`} fill="none" stroke="currentColor" strokeWidth={sw} strokeLinecap="round" strokeLinejoin="round">
    <path d={d} />
  </svg>
);

const HeaderActions = () => (
  <PanelActions>
    <IconButton aria-label="Collapse"><Stroke d="M2 6 L10 14 L18 6" sw={3} /></IconButton>
    <IconButton aria-label="Split columns"><Stroke d="M3 1 H17 Q19 1 19 3 V17 Q19 19 17 19 H3 Q1 19 1 17 V3 Q1 1 3 1 Z M10 1 V19" /></IconButton>
    <IconButton aria-label="Split rows"><Stroke d="M3 1 H17 Q19 1 19 3 V17 Q19 19 17 19 H3 Q1 19 1 17 V3 Q1 1 3 1 Z M1 10 H19" /></IconButton>
    <IconButton aria-label="Close"><Stroke d="M2 1 L12 12 M12 1 L2 12" w={14} h={15} sw={3} /></IconButton>
  </PanelActions>
);

/* ---------- views ---------- */

const Scatter = () => (
  <PlotSvg viewBox="1 163 1194 1222" role="img" aria-label="UMAP scatter plot by cell type">
    <g stroke="#e5e5e5" strokeWidth="2">
      {xTicks.map((v) => <line key={v} x1={xPos(v)} x2={xPos(v)} y1="283" y2="1297" />)}
      {yTicks.map((v) => <line key={v} y1={yPos(v)} y2={yPos(v)} x1="122" x2="879" />)}
    </g>
    {plotted.map((c) => (
      <g key={c.name} fill={c.color} fillOpacity="0.8">
        {c.dots.map(([x, y], i) => <circle key={i} cx={x} cy={y} r="2.2" />)}
      </g>
    ))}
    <circle cx="645.7" cy="669.3" r="4.5" fill="#e05050" stroke="#000" strokeWidth="2.6" />
    <g stroke="#000" strokeWidth="2">
      <path d="M115 283 V1303 H879" fill="none" />
      {xTicks.map((v) => <line key={v} x1={xPos(v)} x2={xPos(v)} y1="1304" y2="1312" />)}
      {yTicks.map((v) => <line key={v} y1={yPos(v)} y2={yPos(v)} x1="107" x2="114" />)}
    </g>
    <g fontSize="18">
      {xTicks.map((v) => <text key={v} x={xPos(v)} y="1333" textAnchor="middle">{label(v)}</text>)}
      {yTicks.map((v) => <text key={v} x="103" y={yPos(v) + 6} textAnchor="end">{label(v)}</text>)}
    </g>
    <text x="500" y="1375" fontSize="21" textAnchor="middle">obsm.X_umap.0</text>
    <text transform="translate(65 790) rotate(-90)" fontSize="21" textAnchor="middle">obsm.X_umap.1</text>
    <text x="920" y="353" fontSize="21">obs.highres_celltype</text>
    {plotted.map((c, i) => (
      <g key={c.name}>
        <circle cx="947" cy={375 + i * 28.5} r="9" fill={c.color} fillOpacity="0.8" />
        <text x="977" y={382 + i * 28.5} fontSize="18">{c.name}</text>
      </g>
    ))}
  </PlotSvg>
);

const CellTypePanel = () => (
  <Panel>
    <PanelHeader>
      <PanelTitle>Cell type</PanelTitle>
      <HeaderActions />
    </PanelHeader>
    <PlotBody>
      <Scatter />
      <RemovedNote>
        <strong>Removed Datapoints</strong>
        <span>Not in this part (2 of 3):</span>
        <span>5,090</span>
        <RemovedTotal>Total: 5,090 (63%)</RemovedTotal>
      </RemovedNote>
      <ModeBar>
        <ModeButton $active aria-label="Zoom"><ModeIcon name="zoom" /></ModeButton>
        <ModeButton aria-label="Pan"><ModeIcon name="pan" /></ModeButton>
        <ModeButton $gap aria-label="Zoom in"><ModeIcon name="plus" /></ModeButton>
        <ModeButton aria-label="Zoom out"><ModeIcon name="minus" /></ModeButton>
        <ModeButton aria-label="Reset axes"><ModeIcon name="home" /></ModeButton>
        <ModeButton $gap aria-label="Download plot"><ModeIcon name="camera" /></ModeButton>
      </ModeBar>
    </PlotBody>
  </Panel>
);

const CellTablePanel = () => (
  <Panel>
    <PanelHeader>
      <PanelTitle>Cell table</PanelTitle>
      <HeaderActions />
    </PanelHeader>
    <SearchArea>
      <AdvancedSearch>
        <AdvancedTitle>Advanced Search</AdvancedTitle>
        <ConditionBox>
          <AddButton>Add Condition</AddButton>
        </ConditionBox>
      </AdvancedSearch>
      <SearchSide>
        <SearchInput type="search" aria-label="Search table" />
        <OptionRow>
          <OptionLabel>Search options:</OptionLabel>
          <OptionButton aria-label="Regular expression">.*</OptionButton>
          <OptionButton $active aria-label="Smart search"><FaWandMagicSparkles size={20} /></OptionButton>
          <OptionButton aria-label="Match case">Aa</OptionButton>
        </OptionRow>
      </SearchSide>
    </SearchArea>
    <TableWindow>
      <DataTable>
        <colgroup>
          <col />
          <AgeCol />
          <TypeCol />
        </colgroup>
        <thead>
          <tr><th>Cell ID</th><th>Age</th><th>highres_celltype</th></tr>
        </thead>
        <tbody>
          {rows.map(([id, age, type]) => (
            <tr key={id}>
              <td><CellLink href="#">{id}</CellLink></td>
              <td>{age}</td>
              <td>{type}</td>
            </tr>
          ))}
        </tbody>
      </DataTable>
    </TableWindow>
    <TableFooter>
      <EntryCount>Showing 1 to 25 of 3,000 entries</EntryCount>
      <Pager aria-label="Table pages">
        <PageButton $quiet aria-label="Previous"><Stroke d="M10 2 L3 10 L10 18" w={14} sw={3} /></PageButton>
        <PageButton $active>1</PageButton>
        <PageButton>2</PageButton>
        <PageButton>3</PageButton>
        <PageButton>4</PageButton>
        <PageButton>5</PageButton>
        <PageButton $quiet>…</PageButton>
        <PageButton>120</PageButton>
        <PageButton aria-label="Next"><Stroke d="M4 2 L11 10 L4 18" w={14} sw={3} /></PageButton>
      </Pager>
    </TableFooter>
  </Panel>
);

export default function App() {
  return (
    <Page>
      <GlobalStyle />
      <TopStrip />
      <StatusBar>
        <StatusCell>
          <CountRow>
            <span>Cells: 3,000 of 8,090</span>
            <SubsetBadge>Subset · seed 0</SubsetBadge>
          </CountRow>
          <PartRow>
            <RoundButton aria-label="Previous part"><Stroke d="M6 2 L2 6 L6 10" w={8} h={12} /></RoundButton>
            <label htmlFor="part">Part</label>
            <PartInput id="part" type="text" defaultValue="2" />
            <span>of 3</span>
            <RoundButton aria-label="Next part"><Stroke d="M2 2 L6 6 L2 10" w={8} h={12} /></RoundButton>
          </PartRow>
        </StatusCell>
        <StatusCell>Genes: 16285</StatusCell>
        <StatusCell>Dataset: Bm Aging</StatusCell>
      </StatusBar>
      <Workspace>
        <CellTypePanel />
        <Gutter />
        <CellTablePanel />
      </Workspace>
    </Page>
  );
}
